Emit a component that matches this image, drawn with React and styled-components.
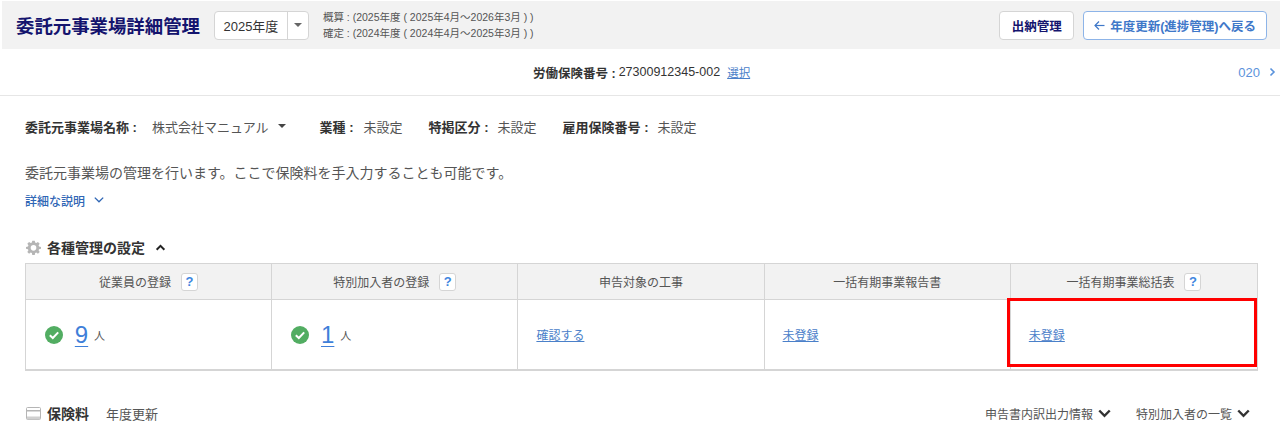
import React from 'react';
import styled, { createGlobalStyle } from 'styled-components';

const GlobalStyle = createGlobalStyle`
  * { box-sizing: border-box; }
  html, body { margin: 0; padding: 0; background: #fff; }
  body {
    font-family: "Liberation Sans", "Noto Sans CJK JP", sans-serif;
    color: #333;
    overflow: hidden;
  }
`;

const Page = styled.div`
  width: 1280px;
  height: 433px;
  overflow: hidden;
  padding-top: 1px;
`;

const TopBar = styled.header`
  height: 48px;
  margin-left: 2px;
  background: #f2f2f2;
  display: flex;
  align-items: center;
  padding: 0 13px 0 14px;
`;

const Title = styled.h1`
  margin: 0;
  font-size: 18.4px;
  font-weight: 700;
  color: #14146e;
  white-space: nowrap;
`;

const YearSelect = styled.div`
  margin-left: 14px;
  width: 95px;
  height: 29px;
  display: flex;
  background: #fff;
  border: 1px solid #d5d5d5;
  border-radius: 4px;
  font-size: 13px;
  color: #333;
`;

const YearValue = styled.span`
  flex: 1;
  display: flex;
  align-items: center;
  justify-content: center;
`;

const YearCaret = styled.span`
  width: 21px;
  border-left: 1px solid #d5d5d5;
  display: flex;
  align-items: center;
  justify-content: center;
  &::after {
    content: '';
    border-left: 4px solid transparent;
    border-right: 4px solid transparent;
    border-top: 4px solid #666;
  }
`;

const PeriodNote = styled.div`
  margin-left: 14px;
  font-size: 10.5px;
  line-height: 16px;
  color: #555;
  white-space: nowrap;
`;

const TopActions = styled.div`
  margin-left: auto;
  display: flex;
  gap: 9px;
`;

const TopButton = styled.button`
  height: 29px;
  padding: 0 ${p => (p.$primary ? '10px' : '11.5px')};
  background: #fff;
  border: 1px solid ${p => (p.$primary ? '#8db4e8' : '#d5d5d5')};
  border-radius: 4px;
  font: 700 12.5px "Liberation Sans", "Noto Sans CJK JP", sans-serif;
  color: ${p => (p.$primary ? '#3f78c9' : '#14146e')};
  display: flex;
  align-items: center;
  gap: 5px;
  white-space: nowrap;
`;

const InsuranceBar = styled.div`
  height: 47px;
  border-bottom: 1px solid #e6e6e6;
  display: flex;
  align-items: center;
  padding: 0 3px 0 533px;
  font-size: 12.5px;
  color: #333;
`;

const InsuranceLabel = styled.strong`
  font-weight: 700;
  margin-right: 3px;
`;

const SelectLink = styled.a`
  margin-left: 7px;
  font-size: 11.5px;
  color: #4a80c9;
  text-decoration: underline;
`;

const PageLink = styled.span`
  margin-left: auto;
  display: flex;
  align-items: center;
  gap: 7px;
  font-size: 13px;
  color: #5b93dc;
`;

const Content = styled.main`
  padding: 0 22px 0 25px;
`;

const InfoRow = styled.div`
  display: flex;
  align-items: center;
  margin-top: 21px;
  height: 18px;
  font-size: 13px;
  color: #555;
`;

const InfoItem = styled.span`
  display: flex;
  align-items: center;
  margin-right: ${p => p.$gap || 26}px;
  white-space: nowrap;
`;

const InfoLabel = styled.strong`
  font-weight: 700;
  color: #333;
  margin-right: ${p => p.$gap || 9}px;
`;

const SmallCaret = styled.span`
  margin-left: 9px;
  border-left: 4px solid transparent;
  border-right: 4px solid transparent;
  border-top: 4px solid #444;
`;

const Lead = styled.p`
  margin: 29px 0 0;
  height: 18px;
  line-height: 18px;
  font-size: 14px;
  color: #555;
`;

const MoreLink = styled.a`
  margin-top: 10px;
  height: 16px;
  display: flex;
  align-items: center;
  gap: 8px;
  font-size: 12px;
  font-weight: 500;
  color: #2f66b5;
`;

const SectionHead = styled.div`
  margin-top: 30px;
  height: 18px;
  display: flex;
  align-items: center;
  font-size: 14px;
  font-weight: 700;
  color: #333;
`;

const SectionIcon = styled.span`
  width: 17px;
  height: 16px;
  margin-left: 1px;
  margin-right: 4px;
  display: flex;
  align-items: center;
  justify-content: flex-start;
`;

const HeadToggle = styled.span`
  display: flex;
  margin-left: 10px;
`;

const Grid = styled.div`
  margin-top: 7px;
  width: 1233px;
  display: grid;
  grid-template-columns: repeat(5, 1fr);
  grid-template-rows: 36px 69px;
  border: 1px solid #d5d5d5;
  border-bottom-width: 2px;
`;

const HeadCell = styled.div`
  background: #f2f2f2;
  border-bottom: 1px solid #d5d5d5;
  border-right: ${p => (p.$last ? 'none' : '1px solid #d5d5d5')};
  display: flex;
  align-items: center;
  justify-content: center;
  gap: 10px;
  font-size: 12px;
  color: #555;
`;

const HelpBadge = styled.span`
  width: 17px;
  height: 18px;
  background: #fff;
  border: 1px solid #d5d5d5;
  border-radius: 3px;
  display: flex;
  align-items: center;
  justify-content: center;
  font-size: 13px;
  font-weight: 700;
  color: #3f86e0;
`;

const BodyCell = styled.div`
  position: relative;
  border-right: ${p => (p.$last ? 'none' : '1px solid #d5d5d5')};
  display: flex;
  align-items: center;
  padding-left: ${p => (p.$count ? '19px' : '18px')};
`;

const CountLink = styled.a`
  margin-left: 11px;
  width: 15px;
  text-align: center;
  font-size: 24px;
  line-height: 28px;
  color: #3f7fd9;
  text-decoration: underline;
  text-decoration-thickness: 1px;
  text-underline-offset: 3px;
`;

const CountUnit = styled.span`
  margin-left: 5px;
  font-size: 11px;
  color: #555;
`;

const CellLink = styled.a`
  font-size: 12px;
  color: #4a80c9;
  text-decoration: underline;
`;

const Highlight = styled.span`
  position: absolute;
  left: -4px;
  top: -2px;
  right: 0;
  bottom: 2px;
  border: 3px solid #f00;
  pointer-events: none;
`;

const BottomRow = styled.div`
  margin-top: 33px;
  height: 18px;
  display: flex;
  align-items: center;
  font-size: 13px;
  color: #555;
`;

const BottomTitle = styled.strong`
  font-size: 14px;
  font-weight: 700;
  color: #333;
  margin-right: 17px;
`;

const BottomLinks = styled.div`
  margin-left: auto;
  margin-right: 7px;
  display: flex;
  gap: 24px;
  font-size: 12px;
`;

const BottomLink = styled.span`
  display: flex;
  align-items: center;
  gap: 4px;
`;

const Chevron = ({ dir = 'down', size = 10, color = '#444', width = 1.6 }) => {
  const points = {
    down: '1.5,3 5,6.5 8.5,3',
    up: '1.5,7 5,3.5 8.5,7',
    right: '3.5,1.5 7,5 3.5,8.5',
  }[dir];
  return (
    <svg width={size} height={size} viewBox="0 0 10 10" fill="none">
      <polyline points={points} stroke={color} strokeWidth={width} />
    </svg>
  );
};

const Gear = () => (
  <svg width="15" height="15" viewBox="0 0 24 24">
    <path
      fill="#b5b5b5"
      fillRule="evenodd"
      d="M10 1h4l.6 3.1 1.9.8 2.6-1.8 2.8 2.8-1.8 2.6.8 1.9L24 11v3l-3.1.6-.8 1.9 1.8 2.6-2.8 2.8-2.6-1.8-1.9.8L14 24h-4l-.6-3.1-1.9-.8-2.6 1.8-2.8-2.8 1.8-2.6-.8-1.9L0 14v-3l3.1-.6.8-1.9-1.8-2.6 2.8-2.8 2.6 1.8 1.9-.8zM12 8a4.5 4.5 0 1 0 0 9 4.5 4.5 0 0 0 0-9z"
    />
  </svg>
);

const CardIcon = () => (
  <svg width="15" height="13" viewBox="0 0 15 13">
    <rect x="0.5" y="0.5" width="14" height="12" rx="1" fill="#fff" stroke="#b5b5b5" />
    <rect x="1" y="3" width="13" height="1.5" fill="#b5b5b5" />
    <rect x="1" y="9.5" width="13" height="3" fill="#d0d0d0" />
  </svg>
);

const CheckIcon = () => (
  <svg width="18" height="18" viewBox="0 0 18 18">
    <circle cx="9" cy="9" r="9" fill="#52ad62" />
    <polyline points="4.8,9.3 7.8,12 13.2,6.4" fill="none" stroke="#fff" strokeWidth="2" />
  </svg>
);

const ArrowLeft = () => (
  <svg width="11" height="11" viewBox="0 0 11 11" fill="none" stroke="#3f78c9" strokeWidth="1.2">
    <polyline points="5,1.5 1,5.5 5,9.5" />
    <line x1="1" y1="5.5" x2="10.5" y2="5.5" />
  </svg>
);

const columns = [
  { title: '従業員の登録', help: true, count: '9' },
  { title: '特別加入者の登録', help: true, count: '1' },
  { title: '申告対象の工事', link: '確認する' },
  { title: '一括有期事業報告書', link: '未登録' },
  { title: '一括有期事業総括表', help: true, link: '未登録', marked: true },
];

export default function App() {
  return (
    <>
      <GlobalStyle />
      <Page>
        <TopBar>
          <Title>委託元事業場詳細管理</Title>
          <YearSelect>
            <YearValue>2025年度</YearValue>
            <YearCaret />
          </YearSelect>
          <PeriodNote>
            <div>概算 : (2025年度 ( 2025年4月～2026年3月 ) )</div>
            <div>確定 : (2024年度 ( 2024年4月～2025年3月 ) )</div>
          </PeriodNote>
          <TopActions>
            <TopButton>出納管理</TopButton>
            <TopButton $primary>
              <ArrowLeft />
              年度更新(進捗管理)へ戻る
            </TopButton>
          </TopActions>
        </TopBar>

        <InsuranceBar>
          <InsuranceLabel>労働保険番号 :</InsuranceLabel>
          27300912345-002
          <SelectLink>選択</SelectLink>
          <PageLink>
            020
            <Chevron dir="right" color="#5b93dc" />
          </PageLink>
        </InsuranceBar>

        <Content>
          <InfoRow>
            <InfoItem $gap={34}>
              <InfoLabel $gap={15}>委託元事業場名称 :</InfoLabel>
              株式会社マニュアル
              <SmallCaret />
            </InfoItem>
            <InfoItem>
              <InfoLabel $gap={10}>業種 :</InfoLabel>
              未設定
            </InfoItem>
            <InfoItem>
              <InfoLabel>特掲区分 :</InfoLabel>
              未設定
            </InfoItem>
            <InfoItem>
              <InfoLabel>雇用保険番号 :</InfoLabel>
              未設定
            </InfoItem>
          </InfoRow>

          <Lead>委託元事業場の管理を行います。ここで保険料を手入力することも可能です。</Lead>
          <MoreLink>
            詳細な説明
            <Chevron color="#2f66b5" size={12} width={1.1} />
          </MoreLink>

          <SectionHead>
            <SectionIcon><Gear /></SectionIcon>
            各種管理の設定
            <HeadToggle>
              <Chevron dir="up" color="#222" size={11} width={1.8} />
            </HeadToggle>
          </SectionHead>

          <Grid>
            {columns.map((c, i) => (
              <HeadCell key={c.title} $last={i === columns.length - 1}>
                {c.title}
                {c.help && <HelpBadge>?</HelpBadge>}
              </HeadCell>
            ))}
            {columns.map((c, i) => (
              <BodyCell key={c.title} $count={!!c.count} $last={i === columns.length - 1}>
                {c.count ? (
                  <>
                    <CheckIcon />
                    <CountLink>{c.count}</CountLink>
                    <CountUnit>人</CountUnit>
                  </>
                ) : (
                  <CellLink>{c.link}</CellLink>
                )}
                {c.marked && <Highlight />}
              </BodyCell>
            ))}
          </Grid>

          <BottomRow>
            <SectionIcon><CardIcon /></SectionIcon>
            <BottomTitle>保険料</BottomTitle>
            年度更新
            <BottomLinks>
              <BottomLink>
                申告書内訳出力情報
                <Chevron color="#333" size={15} />
              </BottomLink>
              <BottomLink>
                特別加入者の一覧
                <Chevron color="#333" size={15} />
              </BottomLink>
            </BottomLinks>
          </BottomRow>
        </Content>
      </Page>
    </>
  );
}
